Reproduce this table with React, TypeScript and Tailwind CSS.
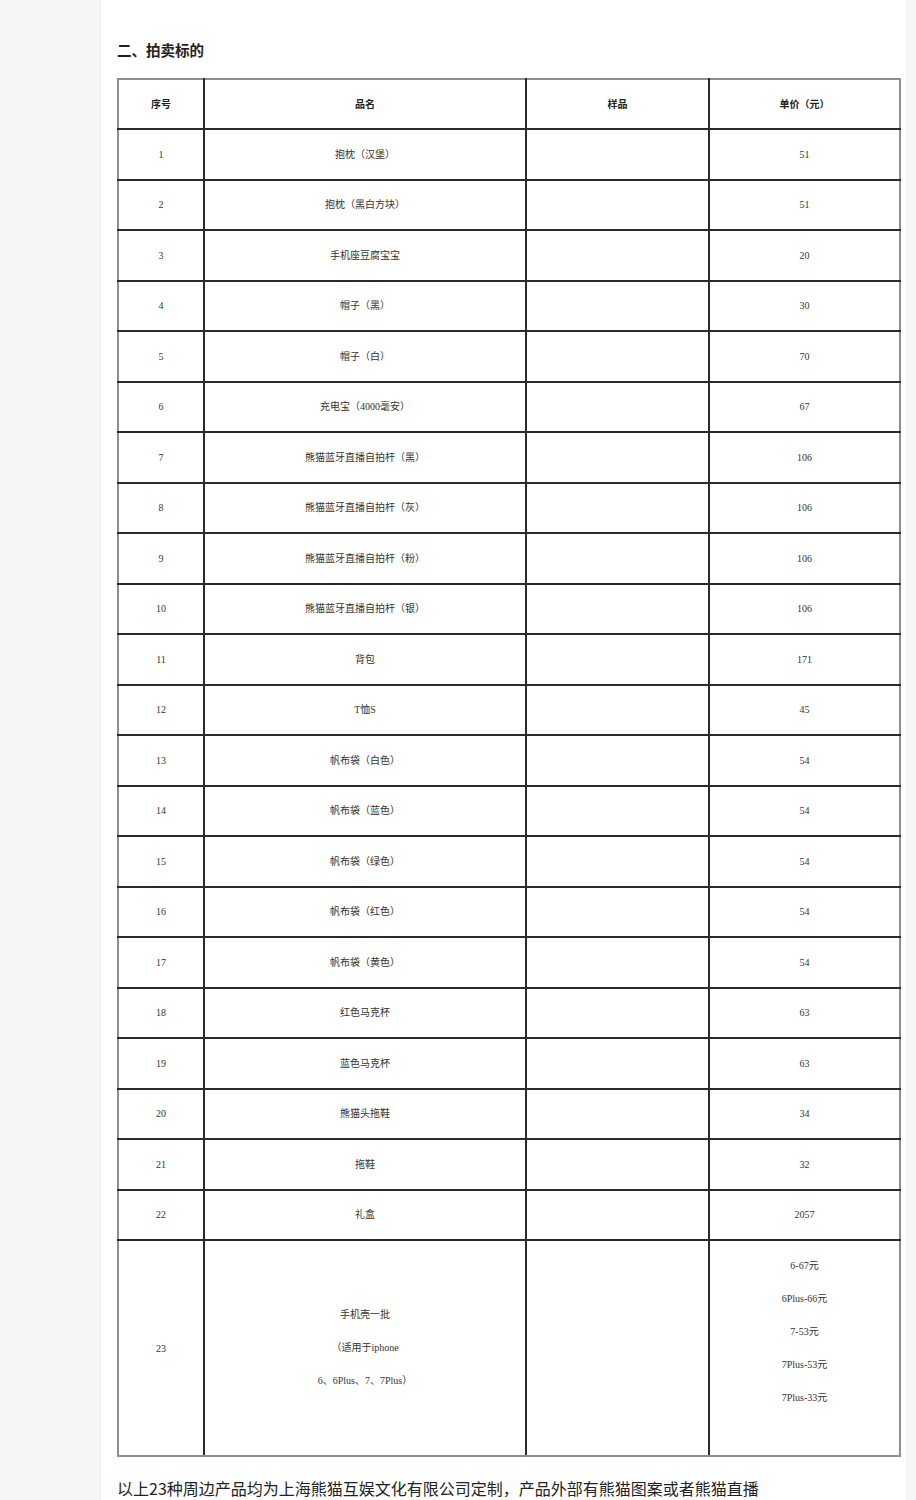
import React from "react"

type Item = { no: number; name: string; price: string }

const items: Item[] = [
  { no: 1, name: "抱枕（汉堡）", price: "51" },
  { no: 2, name: "抱枕（黑白方块）", price: "51" },
  { no: 3, name: "手机座豆腐宝宝", price: "20" },
  { no: 4, name: "帽子（黑）", price: "30" },
  { no: 5, name: "帽子（白）", price: "70" },
  { no: 6, name: "充电宝（4000毫安）", price: "67" },
  { no: 7, name: "熊猫蓝牙直播自拍杆（黑）", price: "106" },
  { no: 8, name: "熊猫蓝牙直播自拍杆（灰）", price: "106" },
  { no: 9, name: "熊猫蓝牙直播自拍杆（粉）", price: "106" },
  { no: 10, name: "熊猫蓝牙直播自拍杆（银）", price: "106" },
  { no: 11, name: "背包", price: "171" },
  { no: 12, name: "T恤S", price: "45" },
  { no: 13, name: "帆布袋（白色）", price: "54" },
  { no: 14, name: "帆布袋（蓝色）", price: "54" },
  { no: 15, name: "帆布袋（绿色）", price: "54" },
  { no: 16, name: "帆布袋（红色）", price: "54" },
  { no: 17, name: "帆布袋（黄色）", price: "54" },
  { no: 18, name: "红色马克杯", price: "63" },
  { no: 19, name: "蓝色马克杯", price: "63" },
  { no: 20, name: "熊猫头拖鞋", price: "34" },
  { no: 21, name: "拖鞋", price: "32" },
  { no: 22, name: "礼盒", price: "2057" },
]

const phonePrices = ["6-67元", "6Plus-66元", "7-53元", "7Plus-53元", "7Plus-33元"]

const cell = "border-2 border-[#2b2b2b] text-center align-middle p-0"
const first = "border-l-[#8e8e8e]"
const last = "border-r-[#8e8e8e]"

export default function App() {
  return (
    <div className="flex min-h-[1500px] w-[916px] bg-[#f6f6f6]">
      <div className="w-[101px] shrink-0 border-r border-[#ececec] bg-[#f6f6f6]" />
      <div className="w-[805px] shrink-0 bg-white pl-[16px] pt-[40px]">
        <h2
          className="text-[14.5px] font-bold leading-[20px] text-[#222]"
          style={{ fontFamily: '"Noto Sans CJK SC", sans-serif' }}
        >
          二、拍卖标的
        </h2>
        <table
          className="mt-[18px] w-[782px] table-fixed border-collapse text-[10px] text-[#333]"
          style={{ fontFamily: '"Liberation Serif", "Noto Sans CJK SC", serif' }}
        >
          <colgroup>
            <col className="w-[86px]" />
            <col className="w-[322px]" />
            <col className="w-[183px]" />
            <col className="w-[191px]" />
          </colgroup>
          <thead>
            <tr className="h-[50px] font-bold text-[#222]">
              <td className={`${cell} ${first} border-t-[#8e8e8e]`}>序号</td>
              <td className={`${cell} border-t-[#8e8e8e]`}>品名</td>
              <td className={`${cell} border-t-[#8e8e8e]`}>样品</td>
              <td className={`${cell} ${last} border-t-[#8e8e8e]`}>单价（元）</td>
            </tr>
          </thead>
          <tbody>
            {items.map((it) => (
              <tr key={it.no} className="h-[50.5px]">
                <td className={`${cell} ${first}`}>{it.no}</td>
                <td className={cell}>{it.name}</td>
                <td className={cell}></td>
                <td className={`${cell} ${last}`}>{it.price}</td>
              </tr>
            ))}
            <tr className="h-[216px]">
              <td className={`${cell} ${first} border-b-[#8e8e8e]`}>23</td>
              <td className={`${cell} border-b-[#8e8e8e]`}>
                <div className="flex flex-col items-center gap-[17px] leading-[16px]">
                  <span>手机壳一批</span>
                  <span>（适用于iphone</span>
                  <span>6、6Plus、7、7Plus）</span>
                </div>
              </td>
              <td className={`${cell} border-b-[#8e8e8e]`}></td>
              <td className={`${cell} ${last} border-b-[#8e8e8e] align-top`}>
                <div className="flex flex-col items-center gap-[17px] pt-[17px] leading-[16px]">
                  {phonePrices.map((p) => (
                    <span key={p}>{p}</span>
                  ))}
                </div>
              </td>
            </tr>
          </tbody>
        </table>
        <p
          className="mt-[19px] text-[16px] leading-[24px] text-[#222]"
          style={{ fontFamily: '"Noto Sans CJK SC", sans-serif' }}
        >
          以上23种周边产品均为上海熊猫互娱文化有限公司定制，产品外部有熊猫图案或者熊猫直播
        </p>
      </div>
      <div className="flex-1 bg-[#f6f6f6]" />
    </div>
  )
}
